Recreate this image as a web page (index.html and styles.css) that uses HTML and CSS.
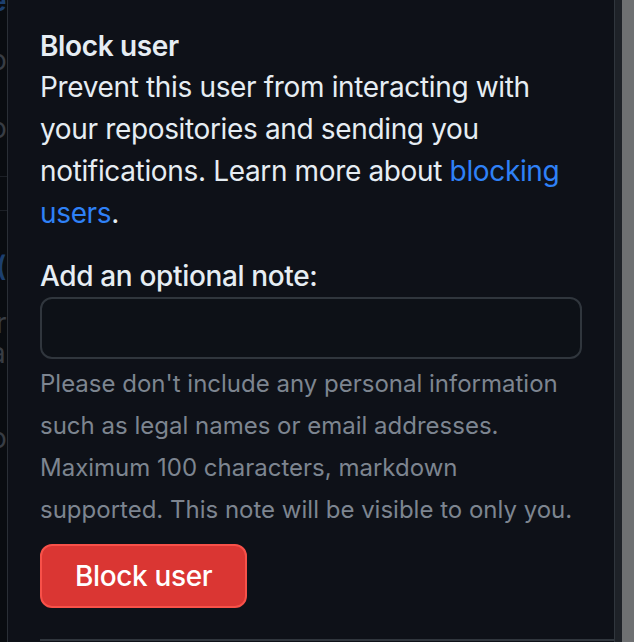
FILE: index.html
```html
<!DOCTYPE html>
<html lang="en">

<head>
  <meta charset="UTF-8" />
  <meta name="viewport" content="width=device-width, initial-scale=1.0" />
  <title>Block user</title>
  <link rel="stylesheet" href="styles.css">
</head>

<body>
  <div class="page">
    <!-- page behind the dialog, only a sliver shows -->
    <div class="behind-left">
      <div class="frag frag-link frag-top">e</div>
      <div class="frag frag-o1">o</div>
      <div class="frag frag-o2">o</div>
      <div class="frag-rule frag-rule1"></div>
      <div class="frag-rule frag-rule2"></div>
      <div class="frag frag-link frag-c">(</div>
      <div class="frag frag-r">r</div>
      <div class="frag frag-a">a</div>
      <div class="frag frag-o3">o</div>
    </div>

    <!-- DIALOG -->
    <div class="dialog">
      <div class="dialog-body">
        <h2 class="title">Block user</h2>
        <p class="desc">
          Prevent this user from interacting with your repositories and sending you notifications.
          Learn more about <a href="#">blocking users</a>.
        </p>

        <label class="note-label" for="note">Add an optional note:</label>
        <input id="note" class="note-input" type="text" />
        <p class="note-hint">
          Please don't include any personal information such as legal names or email addresses.
          Maximum 100 characters, markdown supported. This note will be visible to only you.
        </p>

        <button class="btn-danger">Block user</button>
      </div>
      <div class="dialog-divider"></div>
    </div>

    <div class="scroll-track"></div>
    <div class="backdrop"></div>
  </div>
</body>

</html>
```

FILE: styles.css
```css
body {
  margin: 0;
  font-family: Inter, "Noto Sans", sans-serif;
  background-color: #0d1117;
  color: #e6edf3;
}

.page {
  display: flex;
  height: 642px;
  overflow: hidden;
}

.behind-left {
  width: 7px;
  background-color: #090c10;
  border-right: 1px solid #2a2f36;
  display: flex;
  flex-direction: column;
  overflow: hidden;
}

.frag {
  height: 30px;
  line-height: 30px;
  font-size: 28px;
  margin-left: -10px;
  color: #383d44;
}

.frag-link {
  color: #1c3f6e;
  font-weight: 600;
}

.frag-top {
  margin-top: -14px;
}

.frag-o1 {
  margin-top: 29px;
}

.frag-o2 {
  margin-top: 38px;
}

.frag-rule {
  height: 1px;
  background-color: #1c2026;
}

.frag-rule1 {
  margin-top: 33px;
}

.frag-rule2 {
  margin-top: 33px;
}

.frag-c {
  margin-top: 40px;
  margin-left: -4px;
}

.frag-r {
  margin-top: 27px;
  margin-left: -4px;
}

.frag-a {
  margin-top: 0;
}

.frag-o3 {
  margin-top: 55px;
}

.dialog {
  flex: 1;
  background-color: #0e1118;
  border-right: 1px solid #30363d;
}

.dialog-body {
  padding: 26px 32px 0 32px;
  letter-spacing: -0.35px;
}

.title {
  margin: 0;
  font-size: 28px;
  font-weight: 600;
  line-height: 40px;
}

.desc {
  margin: 0;
  font-size: 28px;
  line-height: 42px;
}

.desc a {
  color: #2f81f7;
  text-decoration: none;
}

.note-label {
  display: block;
  margin-top: 21px;
  font-size: 28px;
  font-weight: 500;
  line-height: 42px;
}

.note-input {
  display: block;
  box-sizing: border-box;
  width: 100%;
  height: 62px;
  margin: 0;
  background-color: #0d1117;
  border: 2px solid #30363d;
  border-radius: 12px;
  color: #e6edf3;
}

.note-hint {
  margin: 4px 0 0 0;
  font-size: 24px;
  line-height: 42px;
  letter-spacing: 0;
  color: #7d8590;
}

.btn-danger {
  margin-top: 13px;
  height: 64px;
  padding: 0 33px;
  font-family: inherit;
  font-size: 28px;
  font-weight: 500;
  letter-spacing: -0.35px;
  color: #ffffff;
  background-color: #da3633;
  border: 2px solid #f85149;
  border-radius: 12px;
  cursor: pointer;
}

.dialog-divider {
  margin: 31px 0 0 32px;
  border-top: 2px solid #30363d;
}

.scroll-track {
  width: 7px;
  background-color: #1e2228;
}

.backdrop {
  width: 12px;
  background-color: #6e7072;
}
```
